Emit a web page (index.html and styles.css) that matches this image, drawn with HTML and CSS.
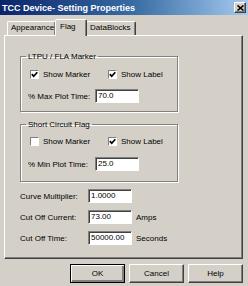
FILE: index.html
```html
<!DOCTYPE html>
<html lang="en">
<head>
    <meta charset="UTF-8">
    <title>TCC Device- Setting Properties</title>
    <link rel="stylesheet" href="styles.css">
</head>
<body>
    <div class="titlebar">
        <span class="title">TCC Device- Setting Properties</span>
        <span class="close">
            <svg width="7" height="6" viewBox="0 0 7 6"><path d="M0.5 0.5 L6.5 5.5 M6.5 0.5 L0.5 5.5" stroke="#000" stroke-width="1.6"/></svg>
        </span>
    </div>

    <div class="tabs">
        <div class="tab tab-appearance">Appearance</div>
        <div class="tab tab-flag active">Flag</div>
        <div class="tab tab-data">DataBlocks</div>
    </div>

    <div class="panel">
        <fieldset class="group group-ltpu">
            <legend>LTPU / FLA Marker</legend>
            <div class="check-row">
                <label class="check first"><span class="box checked"><svg width="7" height="7" viewBox="0 0 7 7"><polyline points="0.8,3.2 2.7,5.2 6.3,1.2" fill="none" stroke="#000" stroke-width="1.7"/></svg></span>Show Marker</label>
                <label class="check"><span class="box checked"><svg width="7" height="7" viewBox="0 0 7 7"><polyline points="0.8,3.2 2.7,5.2 6.3,1.2" fill="none" stroke="#000" stroke-width="1.7"/></svg></span>Show Label</label>
            </div>
            <div class="field-row">
                <span class="field-label">% Max Plot Time:</span>
                <span class="input">70.0</span>
            </div>
        </fieldset>

        <fieldset class="group group-short">
            <legend>Short Circuit Flag</legend>
            <div class="check-row">
                <label class="check first"><span class="box"></span>Show Marker</label>
                <label class="check"><span class="box checked"><svg width="7" height="7" viewBox="0 0 7 7"><polyline points="0.8,3.2 2.7,5.2 6.3,1.2" fill="none" stroke="#000" stroke-width="1.7"/></svg></span>Show Label</label>
            </div>
            <div class="field-row">
                <span class="field-label">% Min Plot Time:</span>
                <span class="input">25.0</span>
            </div>
        </fieldset>

        <div class="settings">
            <div class="setting">
                <span class="setting-label">Curve Multiplier:</span>
                <span class="input">1.0000</span>
            </div>
            <div class="setting">
                <span class="setting-label">Cut Off Current:</span>
                <span class="input">73.00</span>
                <span class="unit">Amps</span>
            </div>
            <div class="setting">
                <span class="setting-label">Cut Off Time:</span>
                <span class="input">50000.00</span>
                <span class="unit">Seconds</span>
            </div>
        </div>
    </div>

    <div class="buttons">
        <button class="btn default">OK</button>
        <button class="btn">Cancel</button>
        <button class="btn">Help</button>
    </div>
</body>
</html>
```

FILE: styles.css
```css
* {
    box-sizing: border-box;
}
body {
    margin: 0;
    width: 248px;
    height: 286px;
    overflow: hidden;
    background-color: #d4d0c8;
    font-family: 'Liberation Sans', Arial, sans-serif;
    font-size: 8px;
    color: #000;
}
.titlebar {
    height: 15px;
    display: flex;
    align-items: center;
    justify-content: space-between;
    padding: 0 2px 0 2px;
    background: linear-gradient(to right, #0a246a, #3a6ea5 55%, #a6caf0);
    color: #fff;
}
.title {
    font-size: 9px;
    font-weight: bold;
    line-height: 10px;
}
.close {
    width: 12px;
    height: 11px;
    display: flex;
    align-items: center;
    justify-content: center;
    background-color: #d4d0c8;
    border: 1px solid;
    border-color: #fff #404040 #404040 #fff;
    box-shadow: inset -1px -1px 0 #808080;
}
.tabs {
    display: flex;
    align-items: flex-end;
    height: 16px;
    margin-top: 4px;
    padding-left: 7px;
}
.tab {
    height: 14px;
    line-height: 12px;
    padding-left: 3px;
    border: 1px solid;
    border-bottom: none;
    border-color: #fff #404040 transparent #fff;
    box-shadow: inset -1px 0 0 #808080;
    border-radius: 2px 2px 0 0;
}
.tab-appearance {
    width: 49px;
}
.tab-flag {
    width: 32px;
    padding-left: 4px;
}
.tab-data {
    width: 50px;
    padding-left: 3px;
}
.tab.active {
    position: relative;
    z-index: 1;
    height: 17px;
    margin-bottom: -1px;
    margin-left: -1px;
    margin-right: -1px;
    line-height: 13px;
    background-color: #d4d0c8;
}
.panel {
    height: 224px;
    margin: 0 5px 0 4px;
    padding: 16px 0 0 15px;
    border: 1px solid;
    border-color: #fff #404040 #404040 #fff;
    box-shadow: inset -1px -1px 0 #808080;
}
.group {
    width: 158px;
    margin: 0;
    padding: 0 0 8px 0;
    border: 1px solid #808080;
    box-shadow: 1px 1px 0 #fff, inset 1px 1px 0 #fff;
}
.group legend {
    margin-left: 5px;
    padding: 0 2px;
    line-height: 9px;
}
.group-short {
    margin-top: 8px;
    padding-bottom: 10px;
}
.check-row {
    display: flex;
    align-items: center;
    height: 10px;
    margin-top: 8px;
    padding-left: 9px;
}
.group-short .check-row {
    margin-top: 7px;
}
.check {
    display: flex;
    align-items: center;
    gap: 4px;
}
.check.first {
    width: 78px;
}
.box {
    width: 9px;
    height: 9px;
    display: flex;
    align-items: center;
    justify-content: center;
    background-color: #fff;
    border: 1px solid;
    border-color: #808080 #fff #fff #808080;
}
.field-row {
    display: flex;
    align-items: center;
    margin-top: 10px;
    padding-left: 7px;
}
.group-short .field-row {
    margin-top: 11px;
}
.field-label {
    width: 67px;
}
.input {
    width: 44px;
    height: 14px;
    line-height: 12px;
    padding-left: 2px;
    background-color: #fff;
    border: 1px solid;
    border-color: #808080 #fff #fff #808080;
    box-shadow: inset 1px 1px 0 #404040;
}
.settings {
    display: flex;
    flex-direction: column;
    gap: 7px;
    margin-top: 7px;
}
.setting {
    display: flex;
    align-items: center;
}
.setting-label {
    width: 68px;
}
.unit {
    margin-left: 4px;
}
.buttons {
    display: flex;
    justify-content: flex-end;
    gap: 4px;
    margin-top: 5px;
    padding-right: 5px;
}
.btn {
    width: 55px;
    height: 19px;
    padding: 0;
    font-family: 'Liberation Sans', Arial, sans-serif;
    font-size: 8px;
    color: #000;
    background-color: #d4d0c8;
    border: 1px solid;
    border-color: #fff #404040 #404040 #fff;
    box-shadow: inset -1px -1px 0 #808080;
}
.btn.default {
    border: 1px solid #000;
    box-shadow: inset 1px 1px 0 #fff, inset -2px -2px 0 #808080;
}
```
